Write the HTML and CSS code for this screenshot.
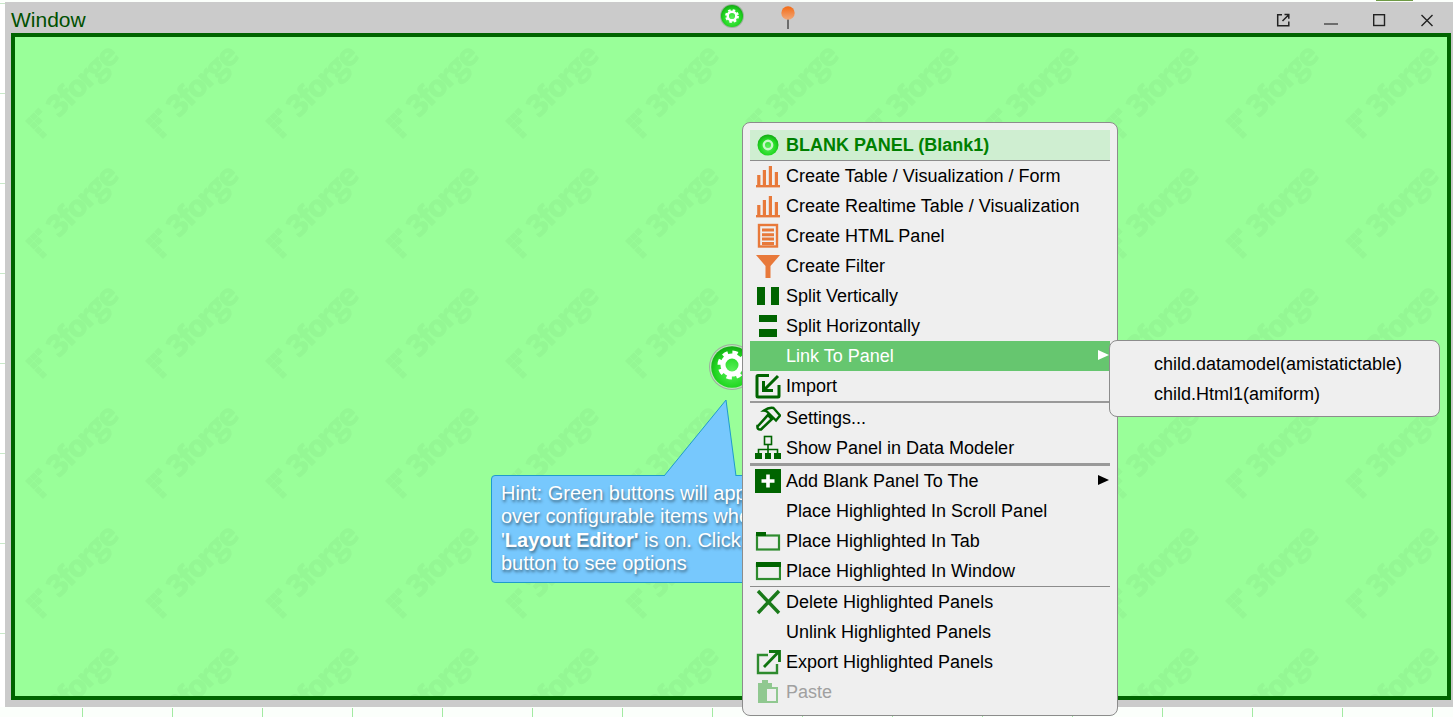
FILE: index.html
```html
<!DOCTYPE html>
<html>
<head>
  <title>Window</title>
  <link rel="stylesheet" href="styles.css">
</head>
<body>

  <svg class="defs" width="0" height="0">
    <defs>
      <symbol id="gear" viewBox="0 0 44 44">
        <circle cx="22" cy="22" r="9" fill="none" stroke="#fff" stroke-width="5"/>
        <circle cx="22" cy="22" r="12.5" fill="none" stroke="#fff" stroke-width="4" stroke-dasharray="5.3 4.52"/>
      </symbol>
      <radialGradient id="ball" cx="50%" cy="60%" r="60%">
        <stop offset="0" stop-color="#5cf05c"/>
        <stop offset="0.65" stop-color="#22d822"/>
        <stop offset="1" stop-color="#12a812"/>
      </radialGradient>
      <linearGradient id="pinball" x1="0" y1="0" x2="0" y2="1">
        <stop offset="0" stop-color="#f46a14"/>
        <stop offset="1" stop-color="#f0a878"/>
      </linearGradient>
      <symbol id="bars" viewBox="0 0 26 26">
        <g fill="#e8793a">
          <rect x="2.2" y="12" width="3.2" height="10"/>
          <rect x="7.8" y="7" width="3.2" height="15"/>
          <rect x="13.8" y="3" width="3.2" height="19"/>
          <rect x="19.8" y="9" width="3.2" height="13"/>
          <rect x="1" y="22" width="24" height="2.4"/>
        </g>
      </symbol>
    </defs>
  </svg>

  <div class="desk">
    <div class="ruler-v"></div>

    <div class="win">
      <div class="win-bar">
        <span class="win-title">Window</span>
        <div class="win-tools">
          <svg class="tool-gear" viewBox="0 0 24 24">
            <circle cx="12" cy="12" r="12" fill="#9db09d"/>
            <circle cx="12" cy="12" r="11" fill="url(#ball)"/>
            <use href="#gear" x="1.5" y="1.5" width="21" height="21"/>
          </svg>
          <svg class="tool-pin" viewBox="0 0 14 28">
            <rect x="6.2" y="14" width="1.6" height="10" fill="#555"/>
            <circle cx="7" cy="8" r="6.7" fill="url(#pinball)"/>
          </svg>
        </div>
        <div class="win-ctrl">
          <button class="ctrl-btn"><svg viewBox="0 0 14 14" width="14" height="14"><path d="M6 1.7H1.7V12.8H12.8V8.5M6.5 8L12.5 2M8.5 1.5H12.8V5.8" fill="none" stroke="#222" stroke-width="1.5"/></svg></button>
          <button class="ctrl-btn"><svg viewBox="0 0 14 14" width="14" height="14"><path d="M0 11H14" stroke="#555" stroke-width="1.6"/></svg></button>
          <button class="ctrl-btn"><svg viewBox="0 0 14 14" width="14" height="14"><rect x="1.7" y="1.7" width="10.8" height="10.8" fill="none" stroke="#222" stroke-width="1.4"/></svg></button>
          <button class="ctrl-btn"><svg viewBox="0 0 14 14" width="14" height="14"><path d="M1.5 2L12.5 13M12.5 2L1.5 13" stroke="#222" stroke-width="1.4"/></svg></button>
        </div>
      </div>

      <div class="panel">
        <svg class="watermark" width="100%" height="100%">
          <defs>
            <pattern id="wm" width="120" height="120" patternUnits="userSpaceOnUse">
              <g fill="#94f794">
                <text class="wm-text" transform="translate(44 82) rotate(-45)">3forge</text>
                <g transform="translate(10 84) rotate(-45)">
                  <rect x="0" y="0" width="6" height="6"/><rect x="6.5" y="0" width="6" height="6"/><rect x="13" y="0" width="6" height="6"/>
                  <rect x="0" y="6.5" width="6" height="6"/><rect x="6.5" y="6.5" width="6" height="6"/>
                  <rect x="0" y="13" width="6" height="6"/>
                  <rect x="0" y="19.5" width="6" height="6"/>
                </g>
              </g>
            </pattern>
          </defs>
          <rect width="100%" height="100%" fill="url(#wm)"/>
        </svg>
      </div>
    </div>
  </div>
  <div class="ruler-h"></div>

  <div class="top-mark"></div>

  <svg class="gear-btn" viewBox="0 0 46 46">
    <circle cx="23" cy="23" r="23" fill="#9db09d"/>
    <circle cx="23" cy="23" r="22" fill="#b9e6b9"/>
    <circle cx="23" cy="23" r="20.8" fill="url(#ball)"/>
    <use href="#gear" x="1" y="-1" width="44" height="44"/>
  </svg>

  <div class="hint">
    <svg class="hint-tail" width="90" height="80" viewBox="0 0 90 80">
      <path d="M1 77L63 1L73 77" fill="#77c8fd" stroke="#1f9ccc" stroke-width="1"/>
    </svg>
    <div class="hint-box">
      Hint: Green buttons will appear<br>
      over configurable items when<br>
      '<b>Layout Editor'</b> is on. Click<br>
      button to see options
    </div>
  </div>

  <div class="menu">
    <div class="row row-title">
      <span class="ico">
        <svg width="26" height="26" viewBox="0 0 26 26">
          <circle cx="13" cy="13" r="10.5" fill="url(#ball)"/>
          <circle cx="13" cy="13" r="4.2" fill="none" stroke="#c8f8c8" stroke-width="2.4"/>
        </svg>
      </span>
      BLANK PANEL (Blank1)
    </div>
    <div class="sep"></div>
    <div class="row"><span class="ico"><svg width="26" height="26"><use href="#bars"/></svg></span>Create Table / Visualization / Form</div>
    <div class="row"><span class="ico"><svg width="26" height="26"><use href="#bars"/></svg></span>Create Realtime Table / Visualization</div>
    <div class="row">
      <span class="ico">
        <svg width="26" height="26" viewBox="0 0 26 26">
          <rect x="4" y="2" width="18" height="21.5" fill="none" stroke="#e8793a" stroke-width="2.4"/>
          <path d="M7 7H19M7 11.7H19M7 16H19M7 20.5H19" stroke="#e8793a" stroke-width="3"/>
        </svg>
      </span>
      Create HTML Panel
    </div>
    <div class="row">
      <span class="ico">
        <svg width="26" height="26" viewBox="0 0 26 26">
          <path d="M1 2H25L15.5 13V25H10.5V13Z" fill="#e8793a"/>
        </svg>
      </span>
      Create Filter
    </div>
    <div class="row">
      <span class="ico">
        <svg width="26" height="26" viewBox="0 0 26 26">
          <path d="M2 4H10V22H2ZM16 4H24V22H16Z" fill="#006400"/>
        </svg>
      </span>
      Split Vertically
    </div>
    <div class="row">
      <span class="ico">
        <svg width="26" height="26" viewBox="0 0 26 26">
          <path d="M4 2H22V9H4ZM4 16H22V24H4Z" fill="#006400"/>
        </svg>
      </span>
      Split Horizontally
    </div>
    <div class="row row-on"><span class="ico"></span>Link To Panel<span class="arrow arrow-white"></span></div>
    <div class="row">
      <span class="ico">
        <svg width="26" height="26" viewBox="0 0 26 26">
          <path d="M14 2.5H3A1 1 0 0 0 2 3.5V23A1 1 0 0 0 3 24H23A1 1 0 0 0 24 23V12" fill="none" stroke="#006400" stroke-width="3"/>
          <path d="M23 3L10 16M8.5 8V17.5H18" fill="none" stroke="#006400" stroke-width="3"/>
        </svg>
      </span>
      Import
    </div>
    <div class="sep sep-mid"></div>
    <div class="row">
      <span class="ico">
        <svg width="26" height="26" viewBox="0 0 26 26">
          <path d="M3 21L13 10L17 14L6 24.5Q2 25 2.5 21Z" fill="none" stroke="#006400" stroke-width="2.6"/>
          <path d="M9 5.5Q14 2 18.5 3L25 10.5L21 15.5L18 12.5L13.5 8Q11.5 5.5 9 5.5Z" fill="#efefef" stroke="#006400" stroke-width="2.4"/>
        </svg>
      </span>
      Settings...
    </div>
    <div class="row">
      <span class="ico">
        <svg width="26" height="26" viewBox="0 0 26 26">
          <rect x="9.5" y="1.5" width="7" height="8" fill="none" stroke="#006400" stroke-width="1.6"/>
          <path d="M13 9.5V18M3.5 18V14.5H22.5V18" fill="none" stroke="#006400" stroke-width="1.6"/>
          <path d="M0 18H7V24H0ZM10 18H16V24H10ZM19 18H26V24H19Z" fill="#006400"/>
        </svg>
      </span>
      Show Panel in Data Modeler
    </div>
    <div class="sep sep-thick"></div>
    <div class="row">
      <span class="ico">
        <svg width="26" height="26" viewBox="0 0 26 26">
          <rect x="0" y="1" width="26" height="24" fill="#006400"/>
          <path d="M13 6.5V19.5M6.5 13H19.5" stroke="#fff" stroke-width="3.6"/>
        </svg>
      </span>
      Add Blank Panel To The<span class="arrow"></span>
    </div>
    <div class="row"><span class="ico"></span>Place Highlighted In Scroll Panel</div>
    <div class="row">
      <span class="ico">
        <svg width="26" height="26" viewBox="0 0 26 26">
          <rect x="2" y="7.5" width="22" height="14" fill="none" stroke="#2e8b2e" stroke-width="2.2"/>
          <rect x="1" y="4" width="10" height="4" fill="#006400"/>
        </svg>
      </span>
      Place Highlighted In Tab
    </div>
    <div class="row">
      <span class="ico">
        <svg width="26" height="26" viewBox="0 0 26 26">
          <rect x="2" y="6" width="23" height="15" fill="none" stroke="#2e8b2e" stroke-width="2.2"/>
          <rect x="1" y="4" width="25" height="5" fill="#006400"/>
        </svg>
      </span>
      Place Highlighted In Window
    </div>
    <div class="sep"></div>
    <div class="row">
      <span class="ico">
        <svg width="26" height="26" viewBox="0 0 26 26">
          <path d="M3 2L24 24M24 2L3 24" stroke="#1a7a1a" stroke-width="3.4"/>
        </svg>
      </span>
      Delete Highlighted Panels
    </div>
    <div class="row"><span class="ico"></span>Unlink Highlighted Panels</div>
    <div class="row">
      <span class="ico">
        <svg width="26" height="26" viewBox="0 0 26 26">
          <path d="M13 6H3V24H22V15" fill="none" stroke="#2e8b2e" stroke-width="2.4"/>
          <path d="M9 18L23 3.5M14 2.5H24.5V13" fill="none" stroke="#117511" stroke-width="2.8"/>
        </svg>
      </span>
      Export Highlighted Panels
    </div>
    <div class="row row-off">
      <span class="ico">
        <svg width="26" height="26" viewBox="0 0 26 26">
          <path d="M3 4H7V1H13V4H17V8H23V24H3Z" fill="#90c890"/>
          <rect x="12" y="10" width="9" height="12" fill="#efefef"/>
        </svg>
      </span>
      Paste
    </div>
  </div>

  <div class="submenu">
    <div class="row row-sub">child.datamodel(amistatictable)</div>
    <div class="row row-sub">child.Html1(amiform)</div>
  </div>

</body>
</html>
```

FILE: styles.css
```css
* {
  box-sizing: border-box;
}
html, body {
  margin: 0;
  height: 717px;
  overflow: hidden;
}
body {
  position: relative;
  font-family: "Liberation Sans", Arial, sans-serif;
  background: #fbfffb;
  padding-top: 2px;
}
.defs {
  position: absolute;
}

.desk {
  display: flex;
  height: 705px;
}
.ruler-v {
  width: 5px;
  background-color: #fff;
  background-image: linear-gradient(to bottom, #c8e8c8 1px, transparent 1px);
  background-size: 100% 90px;
  background-position: 0 1px;
}
.ruler-h {
  height: 9px;
  margin-top: 1px;
  background-image: linear-gradient(to right, #a2eaa2 1px, transparent 1px);
  background-size: 90px 100%;
  background-position: 82px 0;
}
.top-mark {
  position: absolute;
  left: 1376px;
  top: 0;
  width: 37px;
  height: 1px;
  background: #6f9a45;
}

.win {
  flex: 1;
  display: flex;
  flex-direction: column;
  background: #cbcbcb;
  padding: 0 2px 7px 6px;
}
.win-bar {
  display: flex;
  align-items: flex-start;
  height: 31px;
  flex: none;
}
.win-title {
  font-size: 21px;
  line-height: 24px;
  margin-top: 6px;
  color: #005000;
}
.win-tools {
  display: flex;
  gap: 37px;
  margin-left: 634px;
  margin-top: 2px;
}
.tool-gear {
  width: 24px;
  height: 24px;
}
.tool-pin {
  width: 14px;
  height: 28px;
  margin-top: 1px;
}
.win-ctrl {
  display: flex;
  margin-left: auto;
  margin-right: 0;
}
.ctrl-btn {
  width: 48px;
  height: 28px;
  padding: 0;
  border: 0;
  background: none;
  display: flex;
  align-items: center;
  justify-content: center;
  margin-top: 4px;
}

.panel {
  flex: 1;
  border: 4px solid #006400;
  background: #99ff99;
  overflow: hidden;
}
.watermark {
  display: block;
}
.wm-text {
  font-family: "Open Sans", sans-serif;
  font-weight: 800;
  font-size: 31px;
  letter-spacing: -3px;
}

.gear-btn {
  position: absolute;
  left: 709px;
  top: 344px;
  width: 46px;
  height: 46px;
}

.hint {
  position: absolute;
  left: 491px;
  top: 399px;
  width: 280px;
}
.hint-tail {
  position: absolute;
  left: 172px;
  top: 0;
  z-index: 2;
}
.hint-box {
  position: relative;
  margin-top: 76px;
  height: 108px;
  padding: 6px 9px;
  background: #77c8fd;
  border: 1px solid #1f9ccc;
  border-radius: 4px;
  color: #fff;
  font-size: 20px;
  line-height: 23.4px;
  white-space: nowrap;
  text-shadow: 1px 2px 3px rgba(0, 0, 0, 0.5);
}

.menu, .submenu {
  position: absolute;
  background: #efefef;
  border: 1px solid #8c8c8c;
  border-radius: 8px;
  padding: 7px 7px 8px 7px;
}
.menu {
  left: 742px;
  top: 122px;
  width: 376px;
  height: 594px;
}
.submenu {
  left: 1109px;
  top: 340px;
  width: 331px;
  height: 77px;
  padding-top: 8px;
  padding-left: 0;
  padding-right: 0;
}
.row {
  position: relative;
  display: flex;
  align-items: center;
  height: 30px;
  font-size: 18px;
  color: #000;
  white-space: nowrap;
}
.row-sub {
  padding-left: 44px;
}
.row-title {
  background: #cfeed1;
  color: #008000;
  font-weight: bold;
}
.row-on {
  background: #66c66f;
  color: #fff;
}
.row-off {
  color: #a0a0a0;
}
.ico {
  display: flex;
  width: 36px;
  height: 26px;
  padding-left: 5px;
  flex: none;
}
.sep {
  height: 1px;
  background: #8c8c8c;
}
.sep-mid {
  height: 2px;
  background: #999;
}
.sep-thick {
  height: 3px;
  background: #999;
}
.arrow {
  position: absolute;
  right: 1px;
  top: 9px;
  border-left: 11px solid #000;
  border-top: 5.5px solid transparent;
  border-bottom: 5.5px solid transparent;
}
.arrow-white {
  border-left-color: #fff;
}
```
